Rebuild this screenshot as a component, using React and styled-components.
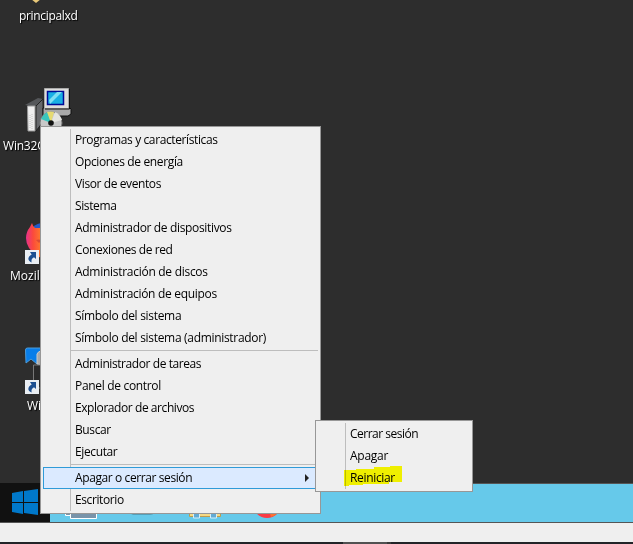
import React from "react";
import styled, { createGlobalStyle } from "styled-components";

const GlobalStyle = createGlobalStyle`
  * { box-sizing: border-box; }
  body { margin: 0; background: #2d2d2d; overflow: hidden; }
`;

const Screen = styled.main`
  position: relative;
  width: 633px;
  height: 544px;
  overflow: hidden;
  display: flex;
  flex-direction: column;
  background: #2d2d2d;
  font: 12px/22px "Open Sans", "Noto Sans", sans-serif;
  color: #000;
`;

const Desktop = styled.section`
  position: relative;
  flex: 1;
`;

const Shortcut = styled.div`
  position: absolute;
  left: ${(p) => p.$x}px;
  top: ${(p) => p.$y}px;
  width: 80px;
  display: flex;
  flex-direction: column;
`;

const ShortcutArt = styled.svg`
  display: block;
  width: 80px;
  height: 48px;
`;

const ShortcutLabel = styled.span`
  margin-left: ${(p) => p.$indent}px;
  margin-top: ${(p) => p.$gap || 0}px;
  height: 20px;
  line-height: 20px;
  color: #fff;
  white-space: nowrap;
  letter-spacing: ${(p) => p.$track || 0}px;
  text-shadow: 1px 1px 1px #000;
`;

const Taskbar = styled.footer`
  height: 40px;
  display: flex;
  background: #66c9ea;
  border-top: 1px solid #555;
  border-bottom: 1px solid #555;
`;

const StartButton = styled.div`
  width: 50px;
  height: 39px;
  margin-top: -1px;
  background: #111;
`;

const TaskIcons = styled.svg`
  display: block;
  width: 270px;
  height: 38px;
`;

const StatusStrip = styled.div`
  height: 19px;
  background: #efefef;
`;

const BottomEdge = styled.div`
  height: 2px;
  padding-left: 343px;
  display: flex;
  background: #222327;
`;

const EdgeSegment = styled.div`
  width: ${(p) => p.$width}px;
  background: ${(p) => p.$color};
`;

const Menu = styled.nav`
  position: absolute;
  left: ${(p) => p.$x}px;
  top: ${(p) => p.$y}px;
  width: ${(p) => p.$width}px;
  padding: 2px;
  border: 1px solid #979797;
  background: #efefef;
`;

const MenuItem = styled.div`
  display: flex;
  align-items: center;
  justify-content: space-between;
  height: 22px;
  padding: 0 7px 0 4px;
  margin-left: 27px;
  border-left: 1px solid #bdbdbd;
  white-space: nowrap;
  ${(p) => p.$active && `
    margin-left: 0;
    padding-left: 31px;
    border: 1px solid #2f9bd8;
    background: #dbeaff;
  `}
`;

const Label = styled.span`
  letter-spacing: ${(p) => p.$track}px;
`;

const Separator = styled.div`
  height: 4px;
  margin-left: 27px;
  border-left: 1px solid #bdbdbd;
  background: linear-gradient(#bdbdbd, #bdbdbd) 0 1px / 100% 1px no-repeat;
`;

const Arrow = styled.svg`
  width: 5px;
  height: 8px;
`;

const Highlighter = styled.svg`
  position: absolute;
  left: 27px;
  top: 45px;
  width: 62px;
  height: 24px;
  mix-blend-mode: multiply;
`;

const groups = [
  [
    ["Programas y características", -0.39],
    ["Opciones de energía", -0.36],
    ["Visor de eventos", -0.4],
    ["Sistema", -0.38],
    ["Administrador de dispositivos", -0.34],
    ["Conexiones de red", -0.42],
    ["Administración de discos", -0.28],
    ["Administración de equipos", -0.3],
    ["Símbolo del sistema", -0.31],
    ["Símbolo del sistema (administrador)", -0.31],
  ],
  [
    ["Administrador de tareas", -0.42],
    ["Panel de control", -0.32],
    ["Explorador de archivos", -0.43],
    ["Buscar", -0.4],
    ["Ejecutar", -0.38],
  ],
  [
    ["Apagar o cerrar sesión", -0.4, true],
    ["Escritorio", -0.4],
  ],
];

const powerItems = [
  ["Cerrar sesión", -0.5],
  ["Apagar", -0.25],
  ["Reiniciar", -0.33],
];

function LinkBadge({ x, y }) {
  return (
    <g transform={`translate(${x} ${y})`}>
      <rect width="14" height="14" fill="#e9eef3" />
      <path d="M5 2h6v7L9 7.2C6.8 8.4 6 10 6.7 12.5 2.3 11 2.2 7 6.7 4.5Z" fill="#1c4f91" />
    </g>
  );
}

function InstallerArt() {
  return (
    <ShortcutArt viewBox="0 0 80 48">
      <path d="M25 18 38 11 43 12 36 20Z" fill="#55575a" />
      <path d="M36 19 43 12V35L36 44Z" fill="#66686b" stroke="#222" />
      <path d="M27.5 19H35V44H28Z" fill="#efefef" stroke="#999" />
      <path d="M30 28v14M32 27v15" stroke="#c4c4c4" strokeDasharray="1 1" />
      <path d="M43 21h27l1 1v5l-3 2H43Z" fill="#a9a9a9" stroke="#111" />
      <path d="M44.5 1.5h24v20h-24Z" fill="#dededc" stroke="#aaa" />
      <path d="M69.5 2v20H45" fill="none" stroke="#111" />
      <path d="M47.5 4.5h16v13h-16Z" fill="#18b0e4" stroke="#000b96" strokeWidth="1.5" />
      <path d="m49 13 8-8h5L50 17Z" fill="#7edff3" />
      <circle cx="51" cy="36" r="11" fill="#c8c8c8" stroke="#777" />
      <path d="m51 36-10-4q3-6 7-7Z" fill="#39c6bd" />
      <path d="m51 36-4-11q4-1 7 0Z" fill="#e6da70" />
      <path d="m51 36 4-11q5 2 7 8Z" fill="#e4e4e0" />
      <circle cx="51" cy="36" r="2.8" fill="#111" />
    </ShortcutArt>
  );
}

function FirefoxArt() {
  return (
    <ShortcutArt viewBox="0 0 80 48">
      <defs>
        <linearGradient id="fox" gradientUnits="userSpaceOnUse" x1="26" y1="0" x2="46" y2="0">
          <stop stopColor="#e8308c" />
          <stop offset=".35" stopColor="#fb4a3c" />
          <stop offset="1" stopColor="#ff9720" />
        </linearGradient>
      </defs>
      <circle cx="43" cy="17" r="14" fill="#245ac8" />
      <path d="M32 3q1 4 3 5 3 0 6 0v3l13 4q-3 14-13 23-15-8-15-20 0-6 4-11Z" fill="url(#fox)" />
      <path d="M36 20q2-1 6 0l-3 3Z" fill="#db4b35" />
      <LinkBadge x={25} y={30} />
    </ShortcutArt>
  );
}

function RemoteArt() {
  return (
    <ShortcutArt viewBox="0 0 80 48">
      <path d="M25.5 4q0-2 2-2H46v16h-9l-6-5-5 4Z" fill="#087eea" stroke="#4d9bd7" />
      <path d="M37 18V8q1-3 5-3v14Z" fill="#aaa" stroke="#ccc" />
      <path d="M33.5 19h9v23h-9Z" fill="#292929" stroke="#777" />
      <LinkBadge x={25} y={34} />
    </ShortcutArt>
  );
}

function MenuRow({ item, arrow }) {
  const [text, track, active] = item;
  return (
    <MenuItem $active={active}>
      <Label $track={track}>{text}</Label>
      {arrow && <Arrow viewBox="0 0 5 8"><path d="M0 0 4 4 0 8Z" fill="#222" /></Arrow>}
    </MenuItem>
  );
}

export default function App() {
  return (
    <Screen>
      <GlobalStyle />
      <Desktop>
        <Shortcut $x={0} $y={-42}>
          <ShortcutArt viewBox="0 0 80 48"><path d="m31 41 5 4 5-4Z" fill="#e8c878" /></ShortcutArt>
          <ShortcutLabel $indent={19} $track={-0.32}>principalxd</ShortcutLabel>
        </Shortcut>
        <Shortcut $x={0} $y={87}>
          <InstallerArt />
          <ShortcutLabel $indent={3} $gap={1} $track={-0.2}>Win32O</ShortcutLabel>
        </Shortcut>
        <Shortcut $x={0} $y={220}>
          <FirefoxArt />
          <ShortcutLabel $indent={10} $gap={-2}>Mozil</ShortcutLabel>
        </Shortcut>
        <Shortcut $x={0} $y={346}>
          <RemoteArt />
          <ShortcutLabel $indent={27} $gap={2}>Wi</ShortcutLabel>
        </Shortcut>
      </Desktop>
      <Taskbar>
        <StartButton>
          <svg width="50" height="39" viewBox="0 0 50 39">
            <path d="m12 10 11-2v11H12Zm12-2 14-2v13H24ZM12 20h11v11l-11-2Zm12 0h14v12l-14-2Z" fill="#0078ca" />
          </svg>
        </StartButton>
        <TaskIcons viewBox="50 484 270 38">
          <path d="M65.5 508v7.5h5M70.5 508v10.5h26V508" fill="#7894aa" stroke="#fff" />
          <path d="M131 508h23v5q-1 2-4 2h-15q-4 0-4-2Z" fill="#559fb9" />
          <path d="M189.5 508v8.5h31V508Z" fill="#f5d984" stroke="#bd9b4e" />
          <path d="M193.5 508v10h6v-10M210.5 508v10h6v-10" fill="#63abd5" stroke="#d7eff7" />
          <circle cx="267" cy="504" r="14" fill="#fa3a45" />
          <path d="M267 504h14q-1 11-10 13Z" fill="#fb7130" />
        </TaskIcons>
      </Taskbar>
      <StatusStrip />
      <BottomEdge>
        <EdgeSegment $width={44} $color="#515151" />
        <EdgeSegment $width={4} $color="#393939" />
      </BottomEdge>
      <Menu $x={40} $y={126} $width={281}>
        {groups.map((items, i) => (
          <React.Fragment key={i}>
            {i > 0 && <Separator />}
            {items.map((item) => <MenuRow key={item[0]} item={item} arrow={item[2]} />)}
          </React.Fragment>
        ))}
      </Menu>
      <Menu $x={315} $y={420} $width={158}>
        {powerItems.map((item) => <MenuRow key={item[0]} item={item} />)}
        <Highlighter viewBox="0 0 62 24">
          <path d="M1 4h12V3h18V1h16V0h12v16h-13v2H20v1H6v1H1Z" fill="#ffff00" />
        </Highlighter>
      </Menu>
    </Screen>
  );
}
